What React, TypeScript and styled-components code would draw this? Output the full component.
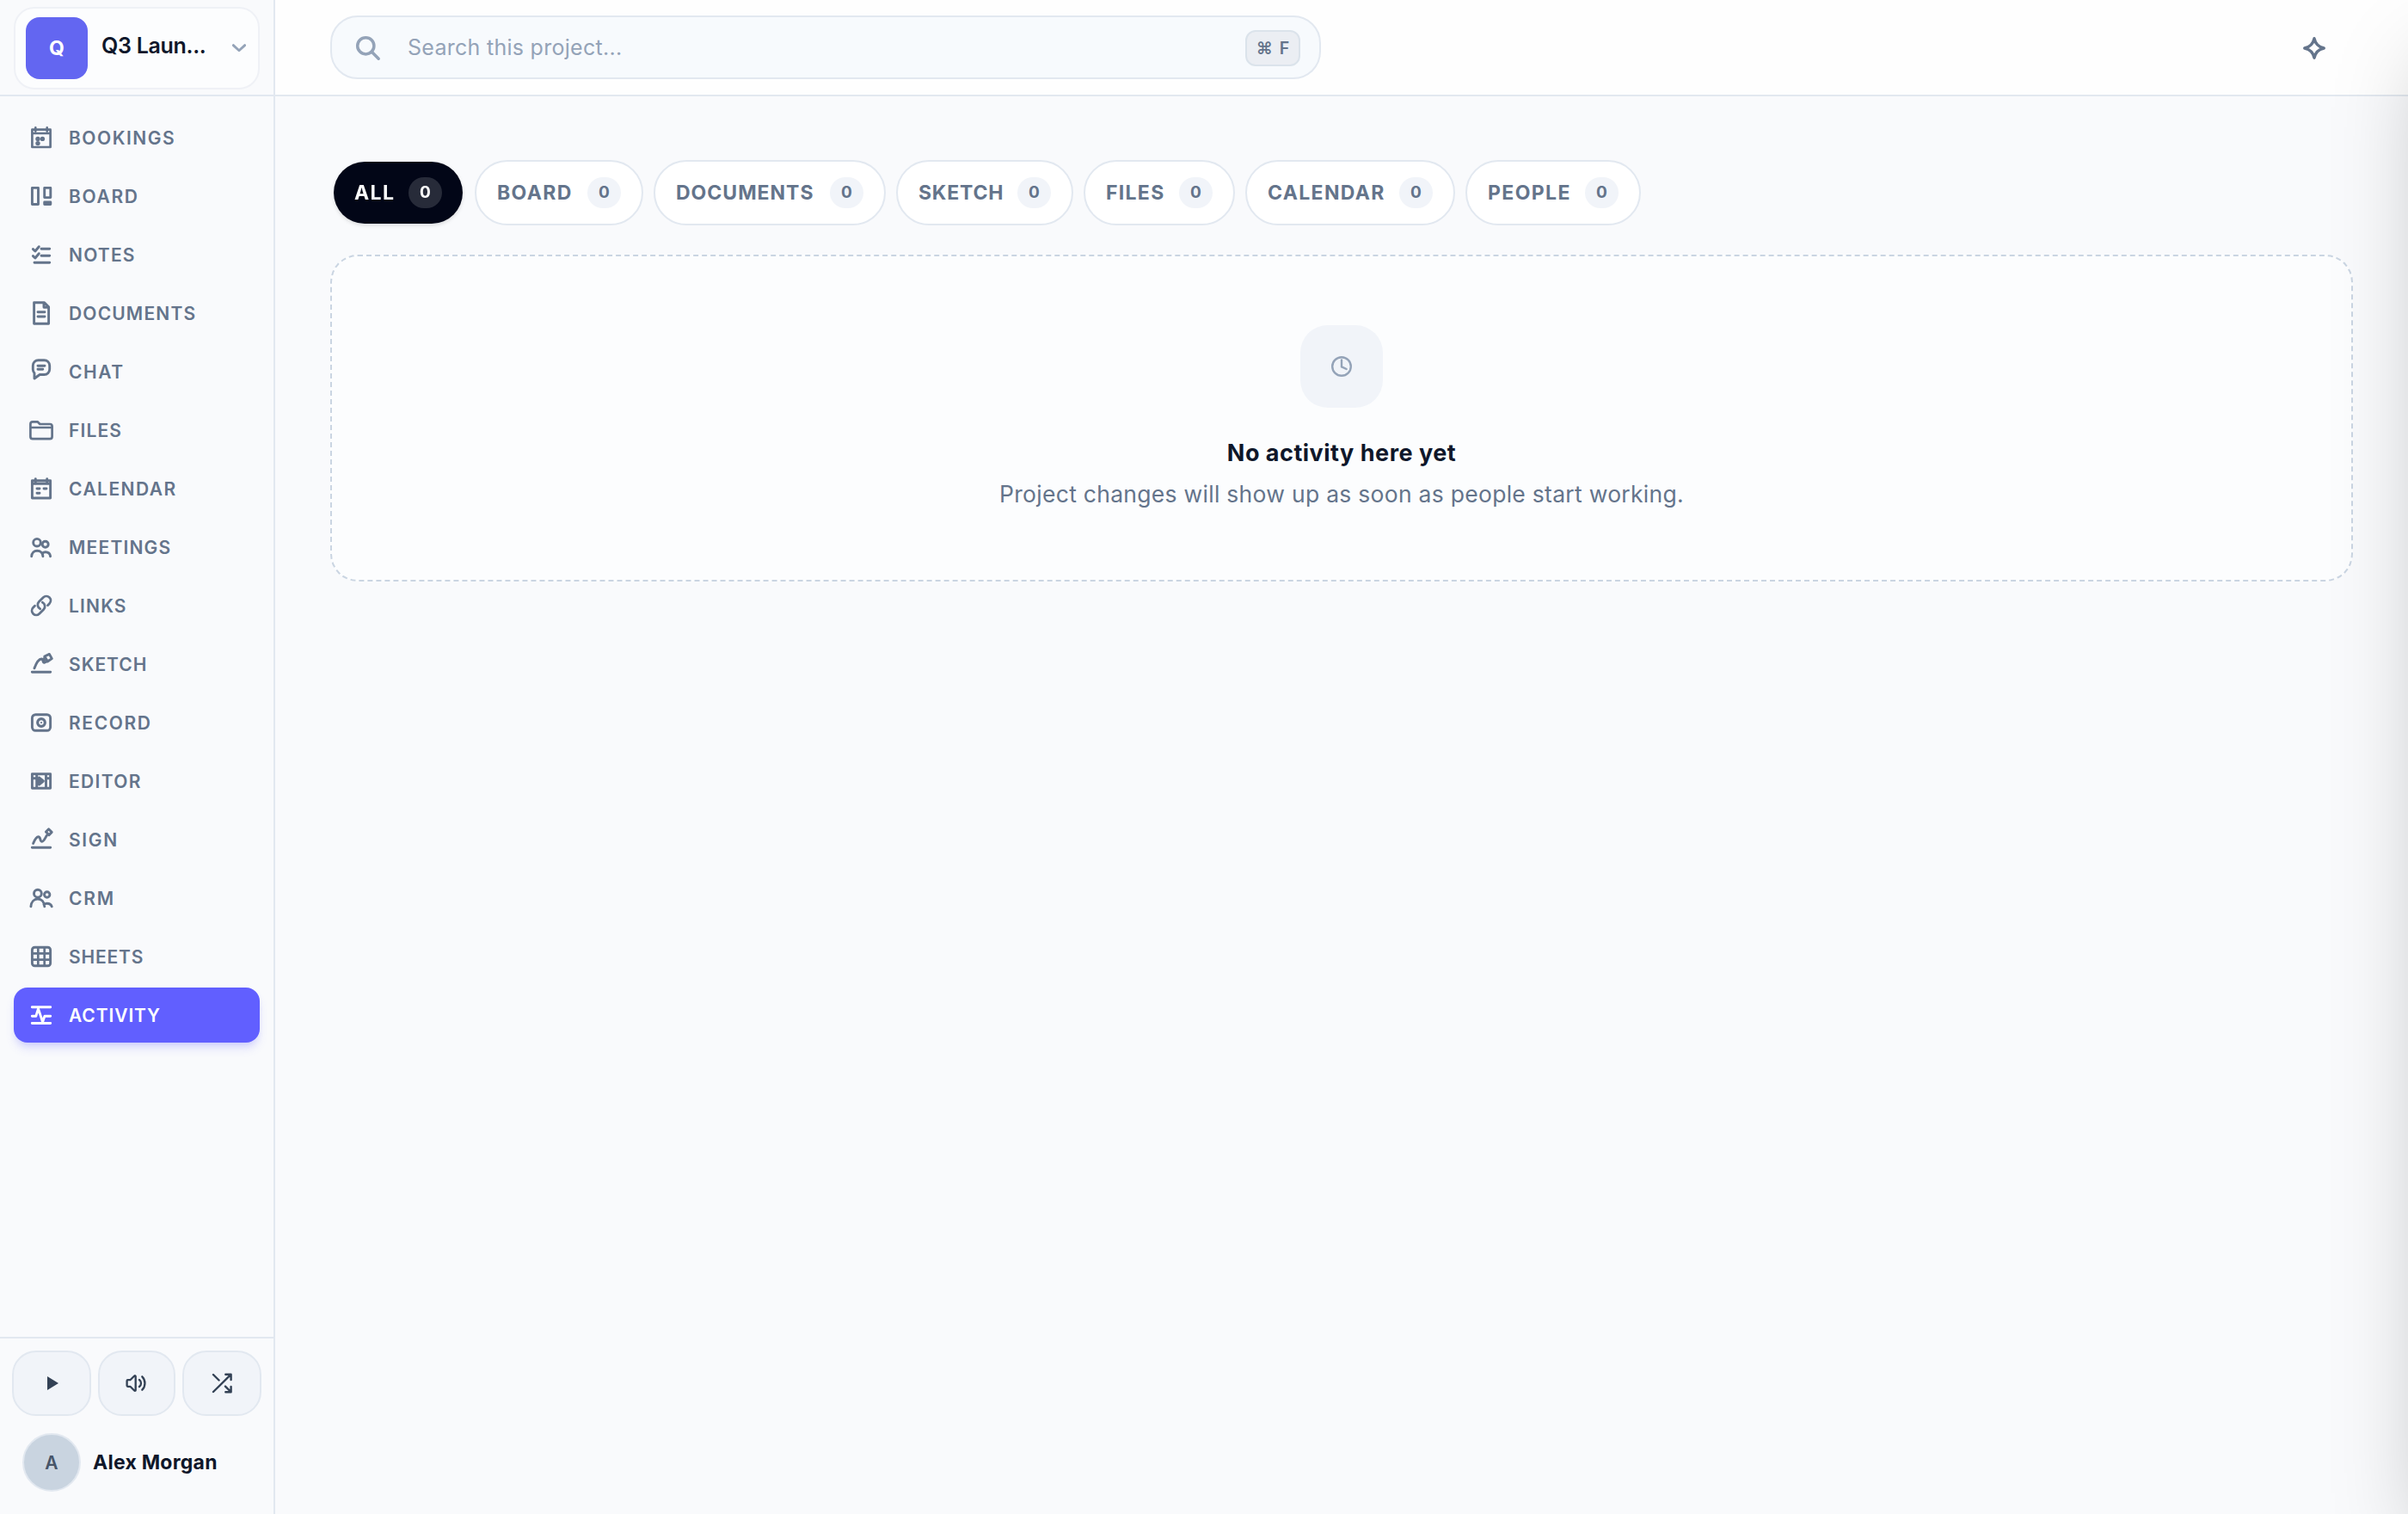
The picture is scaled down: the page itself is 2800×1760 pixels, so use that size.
import React from 'react';
import styled, { createGlobalStyle, css } from 'styled-components';

const GlobalStyle = createGlobalStyle`
  *, *::before, *::after { box-sizing: border-box; }
  body { margin: 0; background: #f9fafc; }
`;

const Shell = styled.div`
  position: relative;
  display: flex;
  width: 100%;
  height: 100vh;
  overflow: hidden;
  background: #f9fafc;
  color: #64748b;
  font-family: Inter, 'Liberation Sans', sans-serif;
`;

/* ---------- Sidebar ---------- */

const Sidebar = styled.aside`
  display: flex;
  flex-direction: column;
  flex: none;
  width: 320px;
  border-right: 2px solid #e2e8f0;
`;

const SidebarTop = styled.div`
  flex: none;
  height: 112px;
  padding: 8px 16px 0;
  border-bottom: 2px solid #e2e8f0;
`;

const ProjectSwitcher = styled.div`
  display: flex;
  align-items: center;
  height: 96px;
  padding: 0 14px 0 12px;
  border: 2px solid #eff1f6;
  border-radius: 24px;
  background: #fcfdfe;
`;

const ProjectLogo = styled.div`
  display: grid;
  place-items: center;
  flex: none;
  width: 72px;
  height: 72px;
  border-radius: 16px;
  background: #6366f1;
  color: #fff;
  font-size: 23px;
  font-weight: 700;
`;

const ProjectName = styled.div`
  flex: 1;
  padding: 0 0 6px 16px;
  color: #0f172a;
  font-size: 25px;
  font-weight: 600;
  letter-spacing: -0.3px;
  line-height: 36px;
  white-space: nowrap;
`;

const Nav = styled.nav`
  display: flex;
  flex: 1;
  flex-direction: column;
  gap: 4px;
  padding: 16px 16px 0;
`;

const NavItem = styled.a<{ $active?: boolean }>`
  display: flex;
  align-items: center;
  gap: 16px;
  height: 64px;
  padding: 0 16px;
  border-radius: 16px;
  ${(p) =>
    p.$active &&
    css`
      background: #615fff;
      color: #fff;
      box-shadow: 0 8px 12px -2px rgba(97, 95, 255, 0.2), 0 4px 8px -4px rgba(97, 95, 255, 0.2);
    `}
`;

const NavLabel = styled.span<{ $track: number }>`
  padding-top: 2px;
  font-size: 21px;
  font-weight: 600;
  line-height: 32px;
  letter-spacing: ${(p) => p.$track - 0.12}px;
`;

const SidebarFooter = styled.div`
  display: flex;
  flex-direction: column;
  gap: 20px;
  height: 206px;
  padding: 14px 14px 0;
  border-top: 2px solid #e2e8f0;
`;

const PlayerRow = styled.div`
  display: grid;
  grid-template-columns: 92px 90px 92px;
  gap: 8px;
`;

const PlayerButton = styled.button`
  display: grid;
  place-items: center;
  height: 76px;
  padding: 0;
  border: 2px solid #e2e8f0;
  border-radius: 28px;
  background: #f1f4f9;
  color: #334155;
`;

const UserRow = styled.div`
  display: flex;
  align-items: center;
  gap: 14px;
  padding-left: 12px;
`;

const Avatar = styled.div`
  display: grid;
  place-items: center;
  width: 68px;
  height: 68px;
  border: 2px solid #e2e8f0;
  border-radius: 50%;
  background: #c9d4e0;
  color: #475569;
  font-size: 21px;
  font-weight: 600;
`;

const UserName = styled.div`
  color: #0f172a;
  font-size: 23px;
  font-weight: 700;
  letter-spacing: 0.25px;
  white-space: nowrap;
`;

/* ---------- Main column ---------- */

const Main = styled.main`
  display: flex;
  flex: 1;
  flex-direction: column;
  min-width: 0;
`;

const TopBar = styled.header`
  display: flex;
  flex: none;
  align-items: center;
  justify-content: space-between;
  height: 112px;
  padding: 0 93px 0 64px;
  border-bottom: 2px solid #e2e8f0;
  background: #fefefe;
`;

const SearchBox = styled.div`
  display: flex;
  align-items: center;
  width: 1152px;
  height: 74px;
  padding: 0 22px 0 26px;
  border: 2px solid #e2e8f0;
  border-radius: 32px;
  background: #f7fafd;
  color: #94a3b8;
`;

const Placeholder = styled.span`
  flex: 1;
  padding-left: 30px;
  font-size: 25px;
  letter-spacing: 0.28px;
`;

const Shortcut = styled.kbd`
  display: flex;
  align-items: center;
  justify-content: center;
  gap: 8px;
  width: 64px;
  height: 42px;
  margin-top: 2px;
  border: 2px solid #dbe3eb;
  border-radius: 12px;
  background: #ebeef3;
  color: #64748b;
  font-family: inherit;
  font-size: 19.5px;
  font-weight: 600;
`;

const Content = styled.section`
  display: flex;
  flex-direction: column;
  gap: 34px;
  padding: 74px 64px 0;
`;

const Filters = styled.div`
  display: flex;
  gap: 12px;
  padding-left: 2px;
`;

const Chip = styled.button<{ $width: number; $active?: boolean }>`
  display: flex;
  align-items: center;
  justify-content: space-between;
  width: ${(p) => p.$width}px;
  height: 76px;
  padding: 0 24px;
  border: 2px solid #e2e8f0;
  border-radius: 38px;
  background: #fff;
  color: #64748b;
  font-family: inherit;
  ${(p) =>
    p.$active &&
    css`
      border-color: transparent;
      background: #020617;
      background-clip: padding-box;
      color: #fff;
      filter: drop-shadow(0 2px 2px rgba(0, 0, 0, 0.12));
    `}
`;

const ChipLabel = styled.span<{ $track: number }>`
  font-size: 23px;
  font-weight: 700;
  letter-spacing: ${(p) => p.$track}px;
`;

const Count = styled.span<{ $active?: boolean }>`
  display: grid;
  place-items: center;
  flex: none;
  width: 39px;
  height: 36px;
  padding-bottom: 2px;
  border-radius: 18px;
  background: ${(p) => (p.$active ? 'rgba(255, 255, 255, 0.15)' : '#f1f4f9')};
  font-size: 19px;
  font-weight: 700;
`;

const EmptyPanel = styled.div`
  display: flex;
  flex-direction: column;
  align-items: center;
  height: 380px;
  padding-top: 80px;
  border: 2px dashed #cad5e2;
  border-radius: 32px;
  background: #fcfdfe;
`;

const EmptyIcon = styled.div`
  display: grid;
  place-items: center;
  width: 96px;
  height: 96px;
  margin-bottom: 33px;
  border-radius: 32px;
  background: #f1f4f9;
  color: #94a3b8;
`;

const EmptyTitle = styled.h2`
  margin: 0 0 7px;
  color: #0f172a;
  font-size: 27px;
  font-weight: 700;
  line-height: 40px;
  letter-spacing: 0.5px;
`;

const EmptyText = styled.p`
  margin: 0;
  font-size: 26.5px;
  line-height: 40px;
  letter-spacing: 0.28px;
`;

/* Closed side drawer: only its shadow reaches the page. */
const Drawer = styled.div`
  position: absolute;
  top: 0;
  left: 100%;
  width: 800px;
  height: 100%;
  box-shadow: 0 50px 100px -24px rgba(0, 0, 0, 0.25);
`;

/* ---------- Icons ---------- */

const Glyph = styled.svg<{ $weight?: number }>`
  display: block;
  flex: none;
  width: 32px;
  height: 32px;
  fill: none;
  stroke: currentColor;
  stroke-width: ${(p) => p.$weight ?? 2.9};
  stroke-linecap: round;
  stroke-linejoin: round;
`;

const Icon = ({ children, weight }: { children: React.ReactNode; weight?: number }) => (
  <Glyph viewBox="0 0 32 32" $weight={weight}>
    {children}
  </Glyph>
);

const SearchGlyph = styled(Glyph)`
  color: #94a3b8;
`;

const Chevron = styled(Glyph)`
  width: 16px;
  height: 16px;
  color: #94a3b8;
`;

const Sparkle = styled(Glyph)`
  margin-top: 2px;
  color: #64748b;
`;

const navItems: { label: string; track: number; icon: React.ReactNode }[] = [
  {
    label: 'BOOKINGS',
    track: 1.63,
    icon: (
      <>
        <path d="M5.4 6.7h21.2V27H5.4zM5.4 11h21.2M9.3 4.4v4M22.7 4.4v4" strokeWidth="2.7" />
        <circle cx="12" cy="17.4" r="2.7" fill="currentColor" stroke="none" />
        <circle cx="17.4" cy="17.4" r="2.7" fill="currentColor" stroke="none" />
        <circle cx="12" cy="22.6" r="2.7" fill="currentColor" stroke="none" />
      </>
    ),
  },
  {
    label: 'BOARD',
    track: 1.8,
    icon: <path d="M5.4 6.4h7.1v19.1H5.4zM19.7 6.4h7.1v11.2h-7.1zM19.7 22.9h7.1v2.6h-7.1z" />,
  },
  {
    label: 'NOTES',
    track: 1.33,
    icon: <path d="M6.4 9.6 8.9 12l4.4-5.3M6.4 17.6 8.9 20l4.4-5.3M16 9.3h9.7M16 17.3h9.7M8 25.3h17.7" />,
  },
  {
    label: 'DOCUMENTS',
    track: 1.28,
    icon: <path d="M7.6 3.7h12l5 5v19.6h-17zM19 4.2v5h5M12 14.7h8M12 20h8" />,
  },
  {
    label: 'CHAT',
    track: 1.7,
    icon: <path d="M8 24v-6.3A6.4 6.4 0 0 1 6.3 13.5V9a6.3 6.3 0 0 1 6.3-6.3h6.8A6.3 6.3 0 0 1 25.7 9v4.2a6.3 6.3 0 0 1-6.3 6.3h-5.2zM12 9.3h8M12 13.3h5.8" />,
  },
  {
    label: 'FILES',
    track: 1.27,
    icon: <path d="M6 6.3h5.6L14.400 9H26a2.600 2.600 0 0 1 2.600 2.600v12a2.600 2.600 0 0 1-2.600 2.600H6a2.600 2.600 0 0 1-2.600-2.600V8.900A2.600 2.600 0 0 1 6 6.300zM3.600 13h24.800" strokeWidth="2.700" />,
  },
  {
    label: 'CALENDAR',
    track: 1.56,
    icon: <path d="M5.400 6.800h21.200V27H5.400zM5.400 10.300h21.200M9.300 4.600v4M22.700 4.600v4M11 16h3M19 16h3M11 21.300h3" />,
  },
  {
    label: 'MEETINGS',
    track: 1.32,
    icon: (
      <>
        <circle cx="11" cy="10.700" r="4.300" />
        <circle cx="20.700" cy="12.700" r="3.500" />
        <path d="M4.700 26.800c.2-4 2.900-6.600 6.500-6.600 3.700 0 6.500 2.600 6.700 6.600M17.300 23.200c1-.9 2.200-1.400 3.600-1.400 3.200 0 5.300 1.900 5.700 5" />
      </>
    ),
  },
  {
    label: 'LINKS',
    track: 1.29,
    icon: (
      <path
        transform="translate(16 16) scale(1.12) translate(-12 -12)"
        strokeWidth="2.500"
        d="M13.190 8.688a4.500 4.500 0 0 1 1.242 7.244l-4.500 4.500a4.500 4.500 0 0 1-6.364-6.364l1.757-1.757m13.350-.622 1.757-1.757a4.500 4.500 0 0 0-6.364-6.364l-4.500 4.500a4.500 4.500 0 0 0 1.242 7.244"
      />
    ),
  },
  {
    label: 'SKETCH',
    track: 1.1,
    icon: <path d="M5.300 25.300h21.400M8 20.800c1.900-5.300 5-10.600 8.300-10.800 2.200-.1 1 4.600 3.400 4.200l4-1.900M19.900 7l5.500-2.600 2.900 5.200-5 3.400zM19.900 7l-.6 5.200" />,
  },
  {
    label: 'RECORD',
    track: 1.73,
    icon: (
      <>
        <rect x="5.400" y="6.700" width="21.200" height="18.600" rx="4" />
        <circle cx="16" cy="16" r="4.300" strokeWidth="3.200" />
        <circle cx="16" cy="16" r="1.100" fill="currentColor" stroke="none" />
      </>
    ),
  },
  {
    label: 'EDITOR',
    track: 1.45,
    icon: (
      <>
        <path d="M5.400 7.700h21.200v16.600H5.400zM10.700 7.700v16.600M21.500 7.700v16.600M5.400 12.800h5M22 12.800h4.700" />
        <path d="m13.400 12 5 4-5 4z" fill="currentColor" />
      </>
    ),
  },
  {
    label: 'SIGN',
    track: 1.78,
    icon: <path d="M5.300 25.300h21.400M6.600 20.500c1.500-3.700 3.600-7.800 6-7.800 3 0 1.500 5.600 4.300 5.600 2.300 0 3.600-4.400 5.800-7.600M24.600 3.800l3.600 3.600-3.200 3.200-3.600-3.600z" />,
  },
  {
    label: 'CRM',
    track: 1.95,
    icon: (
      <>
        <circle cx="11.900" cy="10.700" r="4.400" />
        <circle cx="22.700" cy="12" r="3.200" />
        <path d="M3.900 25.800c.4-5.400 3.700-8.800 8-8.800 4.200 0 7.400 3.300 7.900 8.800M19 23.600c1-.9 2.200-1.400 3.600-1.400 2.900 0 5 1.300 5.600 3.600" />
      </>
    ),
  },
  {
    label: 'SHEETS',
    track: 0.94,
    icon: (
      <>
        <rect x="5.400" y="5.200" width="21.200" height="21.600" rx="3" />
        <path d="M12.300 5.300v21.400M19.700 5.300v21.400M5.300 12.300h21.400M5.300 19.700h21.400" strokeWidth="2.700" />
      </>
    ),
  },
  {
    label: 'ACTIVITY',
    track: 1.02,
    icon: <path d="M5.300 6.700h21.400M5.300 25.500h21.400M5.300 17.300h4.500L12.500 8.600 17.600 24l2.300-6.700h6.800" />,
  },
];

const chips = [
  { label: 'ALL', width: 154, track: 1.4 },
  { label: 'BOARD', width: 196, track: 1.4 },
  { label: 'DOCUMENTS', width: 270, track: 1 },
  { label: 'SKETCH', width: 206, track: 0.8 },
  { label: 'FILES', width: 176, track: 1.3 },
  { label: 'CALENDAR', width: 244, track: 1.35 },
  { label: 'PEOPLE', width: 204, track: 1.4 },
];

export default function App() {
  return (
    <>
      <GlobalStyle />
      <Shell>
        <Sidebar>
          <SidebarTop>
            <ProjectSwitcher>
              <ProjectLogo>Q</ProjectLogo>
              <ProjectName>Q3 Laun...</ProjectName>
              <Chevron viewBox="0 0 16 16" $weight={2.8}>
                <path d="m1.300 4.600 6.700 6.200 6.700-6.200" />
              </Chevron>
            </ProjectSwitcher>
          </SidebarTop>
          <Nav>
            {navItems.map((item) => (
              <NavItem key={item.label} $active={item.label === 'ACTIVITY'}>
                <Icon>{item.icon}</Icon>
                <NavLabel $track={item.track}>{item.label}</NavLabel>
              </NavItem>
            ))}
          </Nav>
          <SidebarFooter>
            <PlayerRow>
              <PlayerButton>
                <Icon>
                  <path d="m11 8 13 8-13 8z" fill="currentColor" stroke="none" />
                </Icon>
              </PlayerButton>
              <PlayerButton>
                <Icon weight={2.3}>
                  <path d="M5.600 12.200h2.800l4.800-4.700c.7-.6 1.500-.3 1.500.6v15.800c0 .9-.8 1.200-1.500.6l-4.800-4.700H5.600c-.6 0-1-.4-1-1v-5.600c0-.6.4-1 1-1zM19 12c2.700 2 2.700 6 0 8M22.300 8.300c4.200 4 4.200 11.400 0 15.400" />
                </Icon>
              </PlayerButton>
              <PlayerButton>
                <Icon weight={2.4}>
                  <path d="M6 26 26.400 5.900M20.300 5.700h6.300V12M6 6l6.600 6.500M20 19.600l6.400 6.400M20.300 26.300h6.300V20" />
                </Icon>
              </PlayerButton>
            </PlayerRow>
            <UserRow>
              <Avatar>A</Avatar>
              <UserName>Alex Morgan</UserName>
            </UserRow>
          </SidebarFooter>
        </Sidebar>

        <Main>
          <TopBar>
            <SearchBox>
              <SearchGlyph viewBox="0 0 32 32" $weight={3.5}>
                <circle cx="13.300" cy="14.300" r="9.600" />
                <path d="m20.500 21.500 7.700 7.700" />
              </SearchGlyph>
              <Placeholder>Search this project...</Placeholder>
              <Shortcut>
                <span>⌘</span>
                <span>F</span>
              </Shortcut>
            </SearchBox>
            <Sparkle viewBox="0 0 32 32" $weight={3.500}>
              <path d="M16 4.800c1.600 6.600 4.600 9.600 11.200 11.200C20.600 17.600 17.600 20.600 16 27.200 14.400 20.600 11.400 17.600 4.800 16 11.400 14.400 14.400 11.400 16 4.800z" />
            </Sparkle>
          </TopBar>

          <Content>
            <Filters>
              {chips.map((chip) => {
                const active = chip.label === 'ALL';
                return (
                  <Chip key={chip.label} $width={chip.width} $active={active}>
                    <ChipLabel $track={chip.track}>{chip.label}</ChipLabel>
                    <Count $active={active}>0</Count>
                  </Chip>
                );
              })}
            </Filters>
            <EmptyPanel>
              <EmptyIcon>
                <Icon weight={2.4}>
                  <circle cx="16" cy="16" r="10.800" />
                  <path d="M16 8.500V16.400l5.600 2.600" />
                </Icon>
              </EmptyIcon>
              <EmptyTitle>No activity here yet</EmptyTitle>
              <EmptyText>Project changes will show up as soon as people start working.</EmptyText>
            </EmptyPanel>
          </Content>
        </Main>
        <Drawer />
      </Shell>
    </>
  );
}
